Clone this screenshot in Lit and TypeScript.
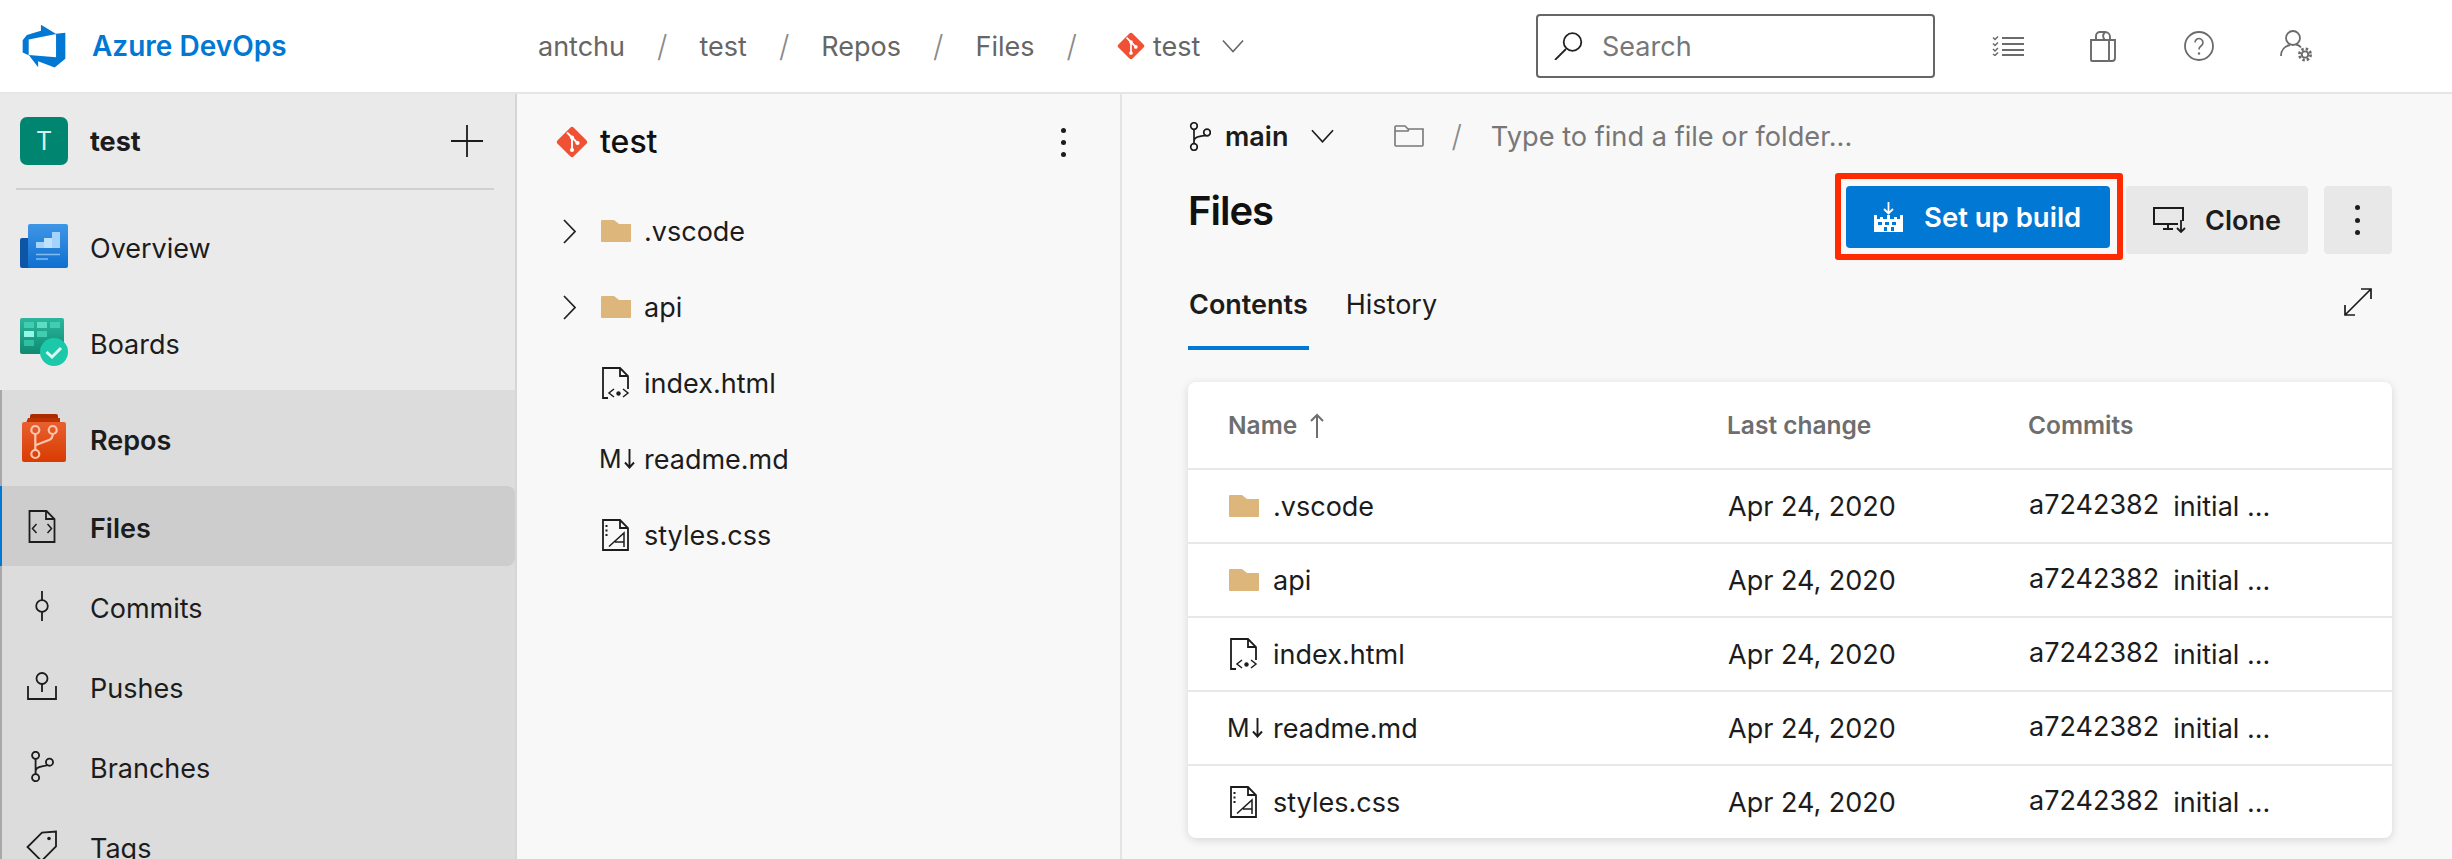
import { LitElement, html, css } from "lit";
import { customElement } from "lit/decorators.js";

const gitIcon = (w: number, h: number) => html`<svg width=${w} height=${h} viewBox="0 0 32 32" class="ic"><rect x="4.600" y="4.600" width="22.800" height="22.800" rx="2.500" transform="rotate(45 16 16)" fill="#f05033"/><path d="M11 6.500l5 5v13M16 11.500l5.500 5.500" fill="none" stroke="#fff" stroke-width="1.900"/><circle cx="16" cy="11.500" r="2.100" fill="#fff"/><circle cx="21.500" cy="17" r="2.100" fill="#fff"/><circle cx="16" cy="24" r="2.100" fill="#fff"/></svg>`;
const chevDown = (w: number, h: number, c: string) => html`<svg width=${w} height=${h} viewBox="0 0 24 14" class="ic"><path d="M1 1l11 12L23 1" fill="none" stroke=${c} stroke-width="1.700"/></svg>`;
const chevRight = html`<svg width="13" height="25" viewBox="0 0 13 25" class="ic"><path d="M1 1l11 11.500L1 24" fill="none" stroke="#222" stroke-width="1.700"/></svg>`;
const folder = html`<svg width="30" height="22" viewBox="0 0 30 22" class="ic"><path d="M0 1a1 1 0 0 1 1-1h12l5 4h12v17a1 1 0 0 1-1 1H1a1 1 0 0 1-1-1z" fill="#dcb67a"/></svg>`;
const branchIcon = (w: number, h: number) => html`<svg width=${w} height=${h} viewBox="0 0 22 29" class="ic" fill="none" stroke="#1c1c1c" stroke-width="1.700"><circle cx="5" cy="4" r="3.300"/><circle cx="5" cy="25" r="3.300"/><circle cx="18" cy="10.500" r="3.300"/><path d="M5 7.300v14.400M5 19c0-3 2-4 6-4.700 3-.5 5-.8 6-1.200"/></svg>`;
const indexIcon = html`<svg width="30" height="32" viewBox="0 0 30 32" class="ic" fill="none" stroke="#1c1c1c" stroke-width="1.800"><path d="M7 31H2V1h17l8 8v13M19 1v8h8"/><path d="M13 23l-5 4 5 4M22 23l5 4-5 4" transform="translate(0 -1)" stroke-width="1.500"/><circle cx="17.500" cy="26.500" r="2.200" fill="#1c1c1c" stroke="none"/></svg>`;
const mdIcon = html`<span class="md">M<svg width="11" height="20" viewBox="0 0 11 20" fill="none" stroke="#1c1c1c" stroke-width="1.900"><path d="M5.500 0v18M1 13.500l4.500 5 4.500-5"/></svg></span>`;
const cssIcon = html`<svg width="30" height="32" viewBox="0 0 30 32" class="ic" fill="none" stroke="#1c1c1c" stroke-width="1.800"><path d="M2 1h17l8 8v22H2zM19 1v8h8"/><path d="M5.500 6v2M5.500 10.500v2M5.500 15v2" stroke-width="2"/><path d="M8 27.500L23 14v14M14 23h9" stroke-width="1.500"/></svg>`;

const icons: Record<string, unknown> = {
  overview: html`<svg width="48" height="44" viewBox="0 0 48 44"><defs><linearGradient id="ov" x1="0" y1="0" x2="0" y2="1"><stop offset="0" stop-color="#3f96e6"/><stop offset="1" stop-color="#0f6fd0"/></linearGradient></defs><path d="M2 14h8v30H2a2 2 0 0 1-2-2V16a2 2 0 0 1 2-2z" fill="#0d56a6"/><rect x="8" width="40" height="44" rx="2" fill="url(#ov)"/><path d="M16 18h8v6h-8z" fill="#a4d4fb"/><path d="M24 14h8v10h-8z" fill="#bfe1fc"/><path d="M32 8h8v16h-8z" fill="#a4d4fb"/><path d="M16 30.500h24" stroke="#7fbcf0" stroke-width="1.500"/><path d="M16 35h12" stroke="#7fbcf0" stroke-width="1.500"/></svg>`,
  boards: html`<svg width="48" height="48" viewBox="0 0 48 48"><defs><linearGradient id="bd" x1="0" y1="0" x2="0" y2="1"><stop offset="0" stop-color="#2cb79c"/><stop offset="1" stop-color="#0f8a72"/></linearGradient></defs><rect width="44" height="36" rx="2" fill="url(#bd)"/><rect x="4" y="4" width="10" height="6" fill="#40cdb0"/><rect x="17" y="4" width="10" height="6" fill="#5fdcc4"/><rect x="30" y="4" width="10" height="6" fill="#40cdb0"/><rect x="4" y="13" width="10" height="6" fill="#92f7e3"/><rect x="17" y="13" width="10" height="6" fill="#40cdb0"/><rect x="4" y="22" width="10" height="6" fill="#30bfa3"/><circle cx="34" cy="34" r="14" fill="#1bc8a9"/><path d="M26.500 34l5.500 5 9-9" fill="none" stroke="#dcfaf3" stroke-width="3"/></svg>`,
  repos: html`<svg width="44" height="48" viewBox="0 0 44 48"><defs><linearGradient id="rp" x1="0" y1="0" x2="0" y2="1"><stop offset="0" stop-color="#e8602f"/><stop offset="1" stop-color="#d83b01"/></linearGradient></defs><path d="M10 0h24a2 2 0 0 1 2 2v4H8V2a2 2 0 0 1 2-2z" fill="#a82c00"/><path d="M6 4h32v5H4z" fill="#bd3200"/><rect y="8" width="44" height="40" rx="2" fill="url(#rp)"/><g fill="none" stroke="#ffc4ad" stroke-width="2.200"><circle cx="13.300" cy="16" r="4"/><circle cx="30.700" cy="16" r="4"/><circle cx="13.300" cy="40" r="4"/><path d="M13.300 20V36M14 31l13-5q3.700-1.400 3.700-6"/></g></svg>`,
  files: html`<svg width="28" height="33" viewBox="0 0 28 33" fill="none" stroke="#1c1c1c" stroke-width="1.800"><path d="M1.500 1h17l8 8v23h-25zM18 1v8h8.500"/><path d="M8.500 14l-4 4.500 4 4.500M19.500 14l4 4.500-4 4.500" stroke-width="1.500"/></svg>`,
  commits: html`<svg width="14" height="30" viewBox="0 0 14 30" fill="none" stroke="#1c1c1c" stroke-width="1.800"><circle cx="7" cy="15" r="5.800"/><path d="M7 0v9M7 21v9"/></svg>`,
  pushes: html`<svg width="30" height="28" viewBox="0 0 30 28" fill="none" stroke="#1c1c1c" stroke-width="1.800"><circle cx="15" cy="6.500" r="5.500"/><path d="M15 12v8M1 14v13h28V14"/></svg>`,
  branches: branchIcon(24, 31),
  tags: html`<svg width="32" height="32" viewBox="0 0 32 32" fill="none" stroke="#1c1c1c" stroke-width="1.800"><path d="M30 1.500v15L15.500 31 1.500 17 16 2.500z"/><circle cx="23" cy="8.500" r="1.800" fill="#1c1c1c" stroke="none"/></svg>`,
};

const rows = [
  { n: ".vscode", ic: folder, dir: true },
  { n: "api", ic: folder, dir: true },
  { n: "index.html", ic: indexIcon, dir: false },
  { n: "readme.md", ic: mdIcon, dir: false },
  { n: "styles.css", ic: cssIcon, dir: false },
];

@customElement("app-root")
export class AppRoot extends LitElement {
  static styles = css`
    :host { display: block; width: 2452px; height: 859px; overflow: hidden; background: #fff; font-family: Inter, "Liberation Sans", sans-serif; font-size: 27px; color: #1c1c1c; }
    * { box-sizing: border-box; }
    .ic { display: block; flex: none; }
    header { height: 94px; border-bottom: 2px solid #e6e6e6; display: flex; align-items: center; background: #fff; }
    .logo { margin-left: 20px; width: 48px; height: 48px; flex: none; }
    .brand { margin-left: 24px; width: 446px; font-size: 28px; font-weight: 600; color: #0078d4; white-space: nowrap; flex: none; }
    .crumbs { display: flex; align-items: center; color: #666; flex: none; width: 998px; }
    .sl { color: #8a8a8a; margin: 0 32px; font-weight: 300; font-size: 30px; }
    .crumbs .rt { margin: 0 8px 0 8px; }
    .crumbs .cd { margin-left: 22px; }
    .search { width: 399px; height: 64px; border: 2px solid #666; border-radius: 4px; display: flex; align-items: center; padding-left: 16px; gap: 18px; color: #777; flex: none; }
    .tools { display: flex; align-items: center; margin-left: 57px; }
    .t2 { margin-left: 66px; }
    .t3 { margin-left: 68px; }
    .body { display: grid; grid-template-columns: 517px 605px 1fr; height: 765px; }
    nav { background: #eaeaea; border-right: 2px solid #d6d6d6; overflow: hidden; display: flex; flex-direction: column; }
    .proj { height: 94px; display: flex; align-items: center; padding: 0 32px 0 20px; flex: none; }
    .av { width: 48px; height: 48px; border-radius: 7px; background: #008670; color: #d7f0ea; display: flex; align-items: center; justify-content: center; font-size: 25px; flex: none; }
    .pname { margin-left: 22px; font-weight: 700; flex: 1; }
    .plus { width: 32px; height: 32px; flex: none; }
    .div { height: 2px; margin: 0 21px 8px 16px; background: #d0d0d0; flex: none; }
    .item { display: flex; align-items: center; height: 96px; padding-left: 20px; flex: none; }
    .slot { width: 48px; display: flex; justify-content: center; align-items: center; flex: none; margin-right: 22px; }
    .slot svg { display: block; }
    .label { position: relative; top: 2px; }
    .sec { background: #dcdcdc; border-left: 2px solid #a8a8a8; flex: 1; }
    .sec .item { padding-left: 18px; font-weight: 600; }
    .sub { display: flex; align-items: center; height: 80px; padding-left: 16px; }
    .sub .slot { margin-right: 24px; }
    .sub.on { background: #cdcdcd; font-weight: 600; border-radius: 0 8px 8px 0; margin-left: -2px; padding-left: 16px; border-left: 2px solid #0078d4; }
    .tree { background: #f8f8f8; border-right: 2px solid #e4e4e4; }
    .thead { height: 96px; display: flex; align-items: center; padding-left: 39px; font-size: 32px; font-weight: 500; color: #111; }
    .tname { margin-left: 12px; flex: 1; position: relative; top: -1px; }
    .dots { width: 6px; display: flex; flex-direction: column; gap: 7px; flex: none; }
    .dots i { display: block; width: 5px; height: 5px; border-radius: 50%; background: #1c1c1c; }
    .thead .dots { margin-right: 53px; }
    .tlist { padding-top: 3px; }
    .trow { height: 76px; display: flex; align-items: center; padding-left: 46px; }
    .cs { width: 38px; flex: none; }
    .is { width: 43px; flex: none; display: flex; }
    .md { display: flex; align-items: center; gap: 2px; font-size: 25px; margin-left: -2px; white-space: nowrap; }
    main { background: #f8f8f8; padding-left: 67px; padding-right: 60px; min-width: 0; }
    .path { height: 86px; display: flex; align-items: center; padding-bottom: 2px; }
    .branch { font-weight: 600; margin-left: 14px; }
    .path .cd { margin-left: 23px; }
    .path .fo { margin-left: 60px; }
    .path .sl { margin: 0 29px 0 27px; }
    .ph { color: #777; font-size: 27.200px; }
    .title { display: flex; height: 78px; padding-top: 6px; justify-content: space-between; align-items: flex-start; }
    h1 { margin: 1px 0 0 -1px; font-size: 40px; line-height: 48px; font-weight: 600; letter-spacing: -1px; color: #111; }
    .btns { display: flex; gap: 16px; align-items: flex-start; }
    .btn { height: 68px; border-radius: 4px; background: #e8e8e8; display: flex; align-items: center; justify-content: center; font-weight: 600; flex: none; }
    .prim { position: relative; width: 264px; height: 62px; background: #0078d4; color: #fff; justify-content: flex-start; padding-left: 28px; gap: 21px; font-size: 27.500px; }
    .mark { position: absolute; top: -13px; left: -11px; right: -13px; bottom: -12px; border: 6px solid #ff2a00; border-radius: 3px; }
    .clone { width: 182px; gap: 19px; }
    .more { width: 68px; }
    .more .dots { gap: 7.500px; }
    .tabs { display: flex; height: 92px; align-items: flex-start; justify-content: space-between; margin-left: -1px; }
    .tl { display: flex; gap: 36px; }
    .tab { height: 92px; display: flex; align-items: center; padding: 0 1px; }
    .tab.on { font-weight: 600; border-bottom: 4px solid #0078d4; padding-top: 4px; }
    .tabs svg { margin: 30px 20px 0 0; }
    .card { margin: 32px 0 0 -1px; width: 1204px; background: #fff; border-radius: 8px; box-shadow: 0 2px 10px rgba(0,0,0,.14); }
    .r { display: grid; grid-template-columns: 499px 301px 1fr; align-items: center; padding-left: 41px; height: 74px; border-top: 2px solid #e8e8e8; }
    .r.h { height: 86px; border-top: 0; color: #6e6e6e; font-size: 24.500px; font-weight: 600; padding-left: 40px; }
    .nm { display: flex; align-items: center; }
    .nm .s { width: 44px; flex: none; display: flex; }
    .arrow { margin-left: 13px; }
    .cm { display: flex; align-items: center; gap: 14px; }
    .hash { position: relative; top: -2px; }
  `;

  render() {
    const dots = html`<span class="dots"><i></i><i></i><i></i></span>`;
    return html`
      <header>
        <svg class="logo" viewBox="0 0 18 18"><path fill="#0078d4" d="M17 4v9.740l-4 3.280-6.200-2.260V17l-3.510-4.590 10.230.8V4.440zm-3.410.49L7.850 1v2.290L2.580 4.840 1 6.870v4.610l2.260 1V6.570z"/></svg>
        <div class="brand">Azure DevOps</div>
        <div class="crumbs">
          <span>antchu</span><span class="sl">/</span><span>test</span><span class="sl">/</span><span>Repos</span><span class="sl">/</span><span>Files</span><span class="sl">/</span>
          <span class="rt">${gitIcon(28, 28)}</span><span>test</span><span class="cd">${chevDown(22, 14, "#666")}</span>
        </div>
        <div class="search">
          <svg class="ic" width="30" height="28" viewBox="0 0 30 28" fill="none" stroke="#222" stroke-width="1.800"><circle cx="18.500" cy="10" r="8.800"/><path d="M12 17L1 28"/></svg>
          <span>Search</span>
        </div>
        <div class="tools">
          <svg class="ic" width="32" height="20" viewBox="0 0 32 20" fill="none" stroke="#6b6b6b" stroke-width="1.800"><path d="M10 2h22M10 8h22M10 14h22M10 19h22" stroke-width="2"/><path d="M1 1.500l2 2 3-3M1 7.500l2 2 3-3M1 13l2 2 3-3M1 18l2 1.500 3-3" stroke-width="1.500"/></svg>
          <svg class="ic t2" width="26" height="32" viewBox="0 0 26 32" fill="none" stroke="#6b6b6b" stroke-width="1.900"><path d="M1 10h18v20a1 1 0 0 1-1 1H2a1 1 0 0 1-1-1zM19 10h6v18a3 3 0 0 1-3 3h-3M6 10V6a4 4 0 0 1 4-4h5a5 5 0 0 1 5 5v3M15 2.200a5 5 0 0 0-0 7.800"/></svg>
          <svg class="ic t3" width="30" height="30" viewBox="0 0 30 30" fill="none" stroke="#6b6b6b" stroke-width="1.800"><circle cx="15" cy="15" r="14"/><path d="M11 11.500a4 4 0 1 1 6 3.500c-1.500 1-2 1.500-2 3.500" stroke-width="1.600"/><circle cx="15" cy="22.500" r="1.200" fill="#6b6b6b" stroke="none"/></svg>
          <svg class="ic t2" width="33" height="32" viewBox="0 0 33 32" fill="none" stroke="#6b6b6b" stroke-width="1.800"><circle cx="13" cy="8" r="7"/><path d="M1 26c0-6 4-10 9-11"/><path d="M16 14.500c2.500.5 4 1.500 5 3"/><circle cx="25" cy="24.500" r="3.200" stroke-width="1.800"/><circle cx="25" cy="24.500" r="5.600" stroke-width="2.800" stroke-dasharray="2.400 2"/></svg>
        </div>
      </header>
      <div class="body">
        <nav>
          <div class="proj">
            <div class="av">T</div><div class="pname">test</div>
            <svg class="plus" viewBox="0 0 32 32"><path d="M16 0v32M0 16h32" stroke="#1c1c1c" stroke-width="1.800"/></svg>
          </div>
          <div class="div"></div>
          <div class="item"><span class="slot">${icons.overview}</span><span class="label">Overview</span></div>
          <div class="item"><span class="slot">${icons.boards}</span><span class="label">Boards</span></div>
          <div class="sec">
            <div class="item"><span class="slot">${icons.repos}</span><span class="label">Repos</span></div>
            <div class="sub on"><span class="slot">${icons.files}</span><span class="label">Files</span></div>
            <div class="sub"><span class="slot">${icons.commits}</span><span class="label">Commits</span></div>
            <div class="sub"><span class="slot">${icons.pushes}</span><span class="label">Pushes</span></div>
            <div class="sub"><span class="slot">${icons.branches}</span><span class="label">Branches</span></div>
            <div class="sub"><span class="slot">${icons.tags}</span><span class="label">Tags</span></div>
          </div>
        </nav>
        <section class="tree">
          <div class="thead">${gitIcon(32, 32)}<span class="tname">test</span>${dots}</div>
          <div class="tlist">
            ${rows.map(r => html`<div class="trow"><span class="cs">${r.dir ? chevRight : ""}</span><span class="is">${r.ic}</span><span>${r.n}</span></div>`)}
          </div>
        </section>
        <main>
          <div class="path">
            ${branchIcon(22, 29)}<span class="branch">main</span><span class="cd">${chevDown(23, 14, "#1c1c1c")}</span>
            <svg class="ic fo" width="30" height="22" viewBox="0 0 30 22" fill="none" stroke="#777" stroke-width="1.600"><path d="M1 2a1 1 0 0 1 1-1h9l3 3h15v16a1 1 0 0 1-1 1H2a1 1 0 0 1-1-1zM1 6h13l1-2"/></svg>
            <span class="sl">/</span><span class="ph">Type to find a file or folder...</span>
          </div>
          <div class="title">
            <h1>Files</h1>
            <div class="btns">
              <div class="btn prim">
                <svg class="ic" width="29" height="30" viewBox="0 0 29 30"><path d="M14.500 0v11M10 7l4.500 4.500L19 7" fill="none" stroke="#fff" stroke-width="1.800"/><path fill="#fff" fill-rule="evenodd" d="M0 13h3v4h3v-2h3v2h4v-4h3v4h4v-2h3v2h3v-4h3v17H0zM4 20v3h4v-3zM11 20v3h4v-3zM18 20v3h4v-3zM10 25v4h3v-4zM17 25v4h3v-4z"/></svg>
                <span>Set up build</span>
                <div class="mark"></div>
              </div>
              <div class="btn clone">
                <svg class="ic" width="33" height="26" viewBox="0 0 33 26" fill="none" stroke="#1c1c1c" stroke-width="2"><path d="M25 17H1V1h29v13M10 22h10M15 17v5"/><path d="M28 13v12M24 21l4 4 4-4" stroke-width="1.800"/></svg>
                <span>Clone</span>
              </div>
              <div class="btn more">${dots}</div>
            </div>
          </div>
          <div class="tabs">
            <div class="tl"><div class="tab on">Contents</div><div class="tab">History</div></div>
            <svg class="ic" width="28" height="28" viewBox="0 0 28 28" fill="none" stroke="#1c1c1c" stroke-width="1.700"><path d="M27 1L1 27M17 1h10v10M1 17v10h10"/></svg>
          </div>
          <div class="card">
            <div class="r h"><div class="nm">Name<svg class="ic arrow" width="14" height="25" viewBox="0 0 14 25" fill="none" stroke="#6e6e6e" stroke-width="2"><path d="M7 25V2M1 8l6-6 6 6"/></svg></div><div>Last change</div><div>Commits</div></div>
            ${rows.map(r => html`<div class="r"><div class="nm"><span class="s">${r.ic}</span><span>${r.n}</span></div><div>Apr 24, 2020</div><div class="cm"><span class="hash">a7242382</span><span>initial ...</span></div></div>`)}
          </div>
        </main>
      </div>
    `;
  }
}
